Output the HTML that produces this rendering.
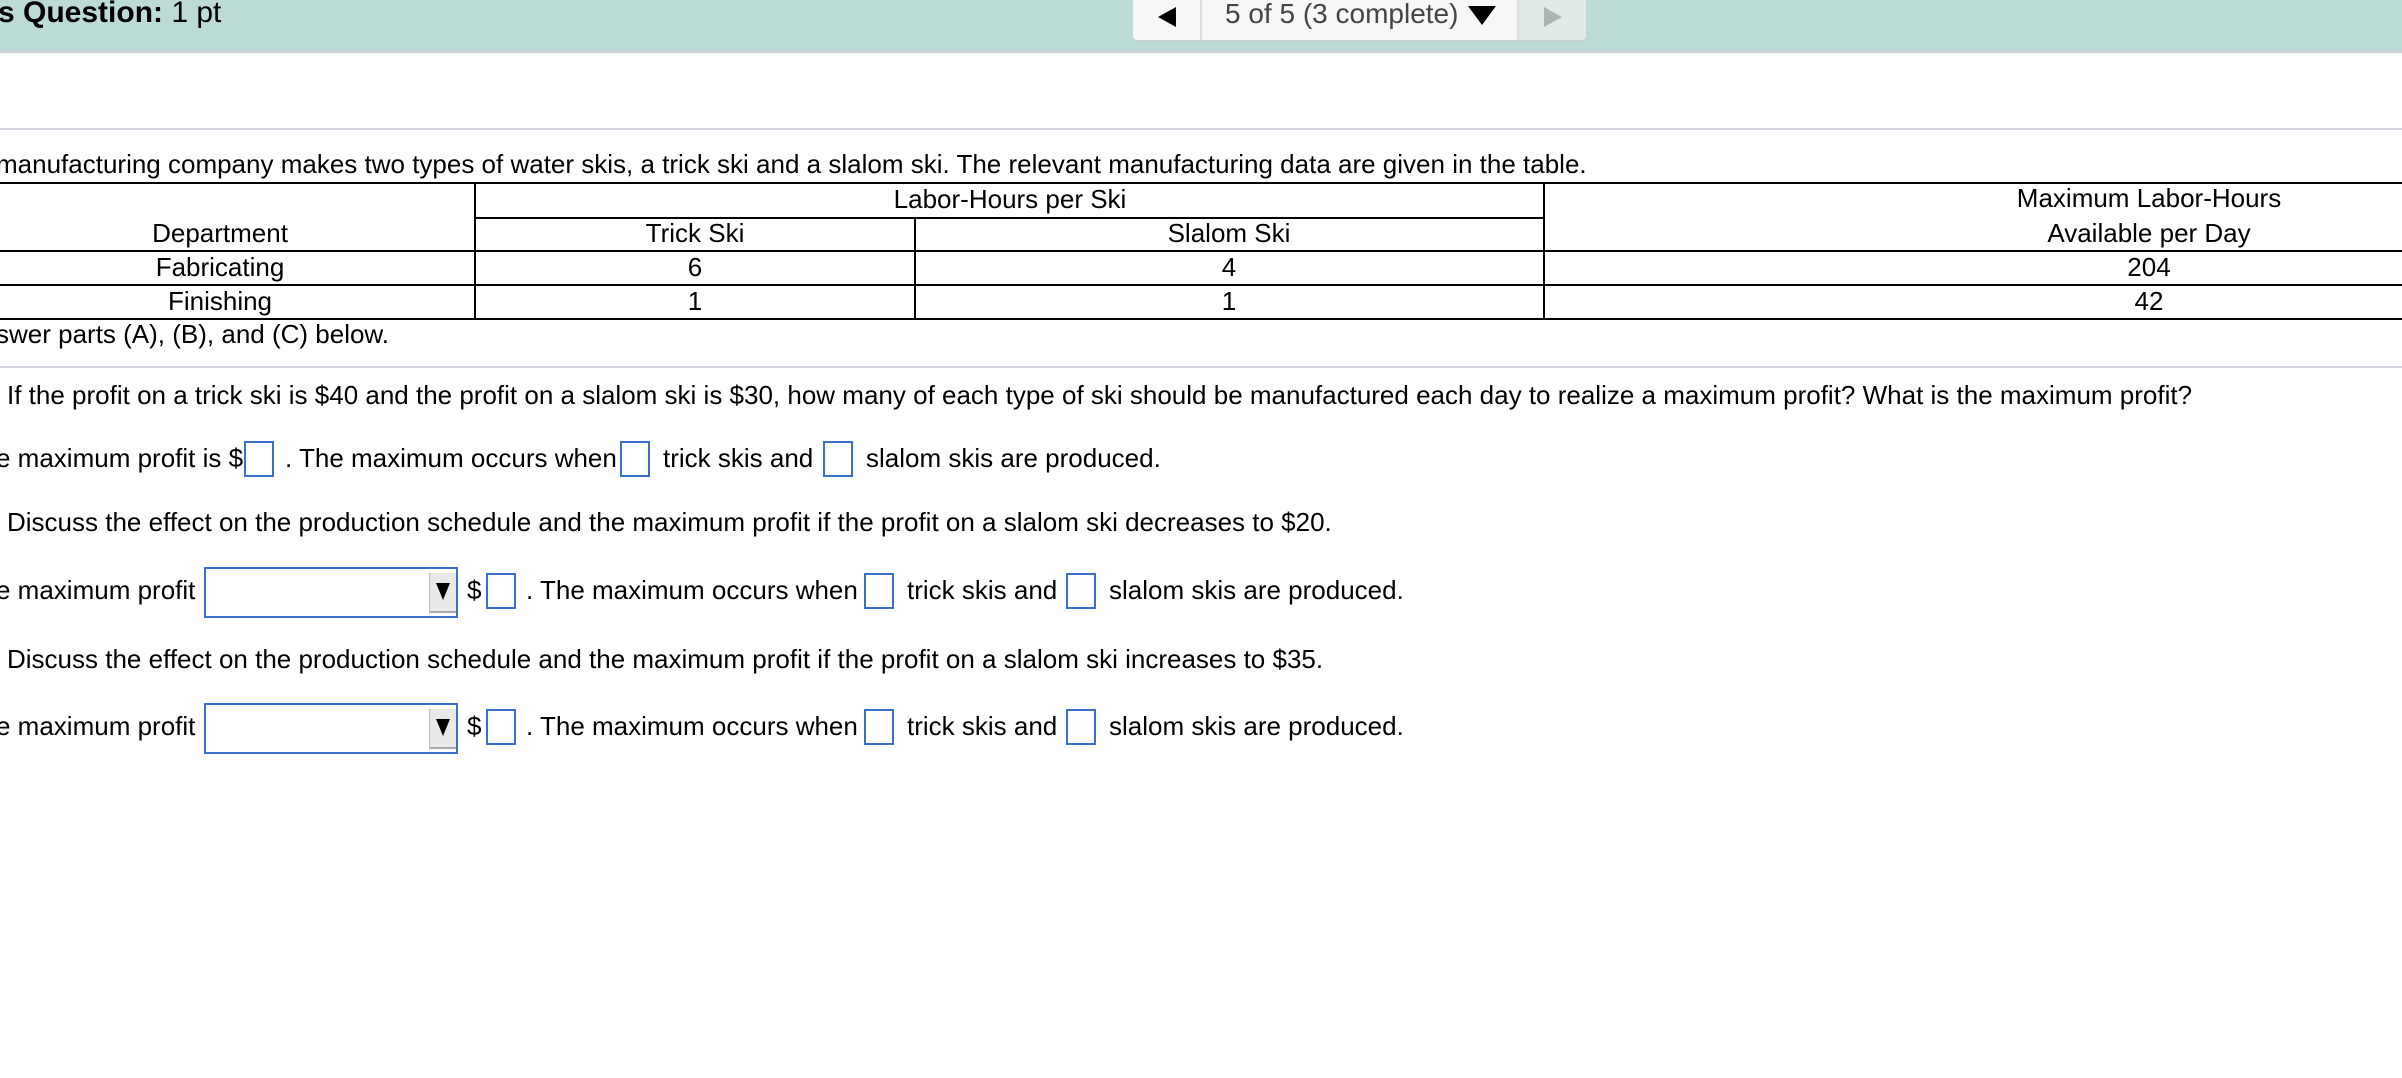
<!DOCTYPE html>
<html><head><meta charset="utf-8"><style>
body{margin:0;width:2402px;height:1078px;overflow:hidden;background:#fff;font-family:"Liberation Sans",Arial,sans-serif;color:#000;position:relative}
.t{position:absolute;white-space:nowrap;font-size:26px;line-height:30px}
.c{transform:translateX(-50%)}
.h{position:absolute;height:2px;background:#000}
.v{position:absolute;width:2px;background:#000}
.box{position:absolute;width:30px;height:34px;border:2px solid #3a6fd0;box-sizing:border-box;background:#fff}
.dd{position:absolute;width:254px;height:51px;border:2px solid #3a6fd0;box-sizing:border-box;background:#fff}
.dd i{position:absolute;right:0;top:4px;width:26px;height:38px;background:#e8e8e8;border-left:1px solid #bbb;border-bottom:2px solid #aaa}
.dd i:after{content:"";position:absolute;left:6px;top:10px;border-left:7px solid transparent;border-right:7px solid transparent;border-top:17px solid #000}
</style></head><body>
<div style="position:absolute;left:0;top:0;width:2402px;height:51px;background:#bcdad6;border-bottom:2px solid #cfd3d8"></div>
<div class="t" style="left:-2px;top:-4px;font-size:30px;line-height:34px"><b>s Question:</b> 1 pt</div>
<div style="position:absolute;left:1133px;top:0;width:453px;height:40px;background:#f7f7f7;border-radius:0 0 4px 4px;box-shadow:0 1px 1px #c8cfcf"></div>
<div style="position:absolute;left:1518px;top:0;width:68px;height:40px;background:#e1eae9;border-radius:0 0 4px 0"></div>
<div style="position:absolute;left:1200px;top:0;width:2px;height:40px;background:#ddd"></div>
<div style="position:absolute;left:1517px;top:0;width:2px;height:40px;background:#ddd"></div>
<div style="position:absolute;left:1158px;top:7px;border-top:10px solid transparent;border-bottom:10px solid transparent;border-right:18px solid #000"></div>
<div style="position:absolute;left:1544px;top:7px;border-top:10px solid transparent;border-bottom:10px solid transparent;border-left:18px solid #aab5b4"></div>
<div class="t" style="left:1225px;top:-3px;font-size:28px;line-height:34px;color:#444">5 of 5 (3 complete)</div>
<div style="position:absolute;left:1468px;top:6px;border-left:14px solid transparent;border-right:14px solid transparent;border-top:19px solid #000"></div>

<div style="position:absolute;left:0;top:128px;width:2402px;height:2px;background:#d0d4dc"></div>
<div class="t" style="left:-4px;top:149px">manufacturing company makes two types of water skis, a trick ski and a slalom ski. The relevant manufacturing data are given in the table.</div>

<div class="h" style="left:0;top:182px;width:2402px"></div>
<div class="h" style="left:475px;top:217px;width:1069px"></div>
<div class="h" style="left:0;top:250px;width:2402px"></div>
<div class="h" style="left:0;top:284px;width:2402px"></div>
<div class="h" style="left:0;top:318px;width:2402px"></div>
<div class="v" style="left:474px;top:182px;height:138px"></div>
<div class="v" style="left:914px;top:217px;height:103px"></div>
<div class="v" style="left:1543px;top:182px;height:138px"></div>
<div class="t c" style="left:1010px;top:184px">Labor-Hours per Ski</div>
<div class="t c" style="left:2149px;top:183px">Maximum Labor-Hours</div>
<div class="t c" style="left:220px;top:218px">Department</div>
<div class="t c" style="left:695px;top:218px">Trick Ski</div>
<div class="t c" style="left:1229px;top:218px">Slalom Ski</div>
<div class="t c" style="left:2149px;top:218px">Available per Day</div>
<div class="t c" style="left:220px;top:252px">Fabricating</div>
<div class="t c" style="left:695px;top:252px">6</div>
<div class="t c" style="left:1229px;top:252px">4</div>
<div class="t c" style="left:2149px;top:252px">204</div>
<div class="t c" style="left:220px;top:286px">Finishing</div>
<div class="t c" style="left:695px;top:286px">1</div>
<div class="t c" style="left:1229px;top:286px">1</div>
<div class="t c" style="left:2149px;top:286px">42</div>
<div class="t" style="left:-4px;top:319px">swer parts (A), (B), and (C) below.</div>
<div style="position:absolute;left:0;top:366px;width:2402px;height:2px;background:#d0d4dc"></div>

<div class="t" style="left:7px;top:380px">If the profit on a trick ski is $40 and the profit on a slalom ski is $30, how many of each type of ski should be manufactured each day to realize a maximum profit? What is the maximum profit?</div>
<div class="t" style="left:-4px;top:443px">e maximum profit is $</div>
<div class="box" style="left:244px;top:441px;height:36px"></div>
<div class="t" style="left:285px;top:443px">. The maximum occurs when</div>
<div class="box" style="left:620px;top:441px;height:36px"></div>
<div class="t" style="left:663px;top:443px">trick skis and</div>
<div class="box" style="left:823px;top:441px;height:36px"></div>
<div class="t" style="left:866px;top:443px">slalom skis are produced.</div>

<div class="t" style="left:7px;top:507px">Discuss the effect on the production schedule and the maximum profit if the profit on a slalom ski decreases to $20.</div>
<div class="t" style="left:-4px;top:575px">e maximum profit</div>
<div class="dd" style="left:204px;top:567px"><i></i></div>
<div class="t" style="left:467px;top:575px">$</div>
<div class="box" style="left:486px;top:573px;height:36px"></div>
<div class="t" style="left:526px;top:575px">. The maximum occurs when</div>
<div class="box" style="left:864px;top:573px;height:36px"></div>
<div class="t" style="left:907px;top:575px">trick skis and</div>
<div class="box" style="left:1066px;top:573px;height:36px"></div>
<div class="t" style="left:1109px;top:575px">slalom skis are produced.</div>

<div class="t" style="left:7px;top:644px">Discuss the effect on the production schedule and the maximum profit if the profit on a slalom ski increases to $35.</div>
<div class="t" style="left:-4px;top:711px">e maximum profit</div>
<div class="dd" style="left:204px;top:703px"><i></i></div>
<div class="t" style="left:467px;top:711px">$</div>
<div class="box" style="left:486px;top:709px;height:36px"></div>
<div class="t" style="left:526px;top:711px">. The maximum occurs when</div>
<div class="box" style="left:864px;top:709px;height:36px"></div>
<div class="t" style="left:907px;top:711px">trick skis and</div>
<div class="box" style="left:1066px;top:709px;height:36px"></div>
<div class="t" style="left:1109px;top:711px">slalom skis are produced.</div>
</body></html>
